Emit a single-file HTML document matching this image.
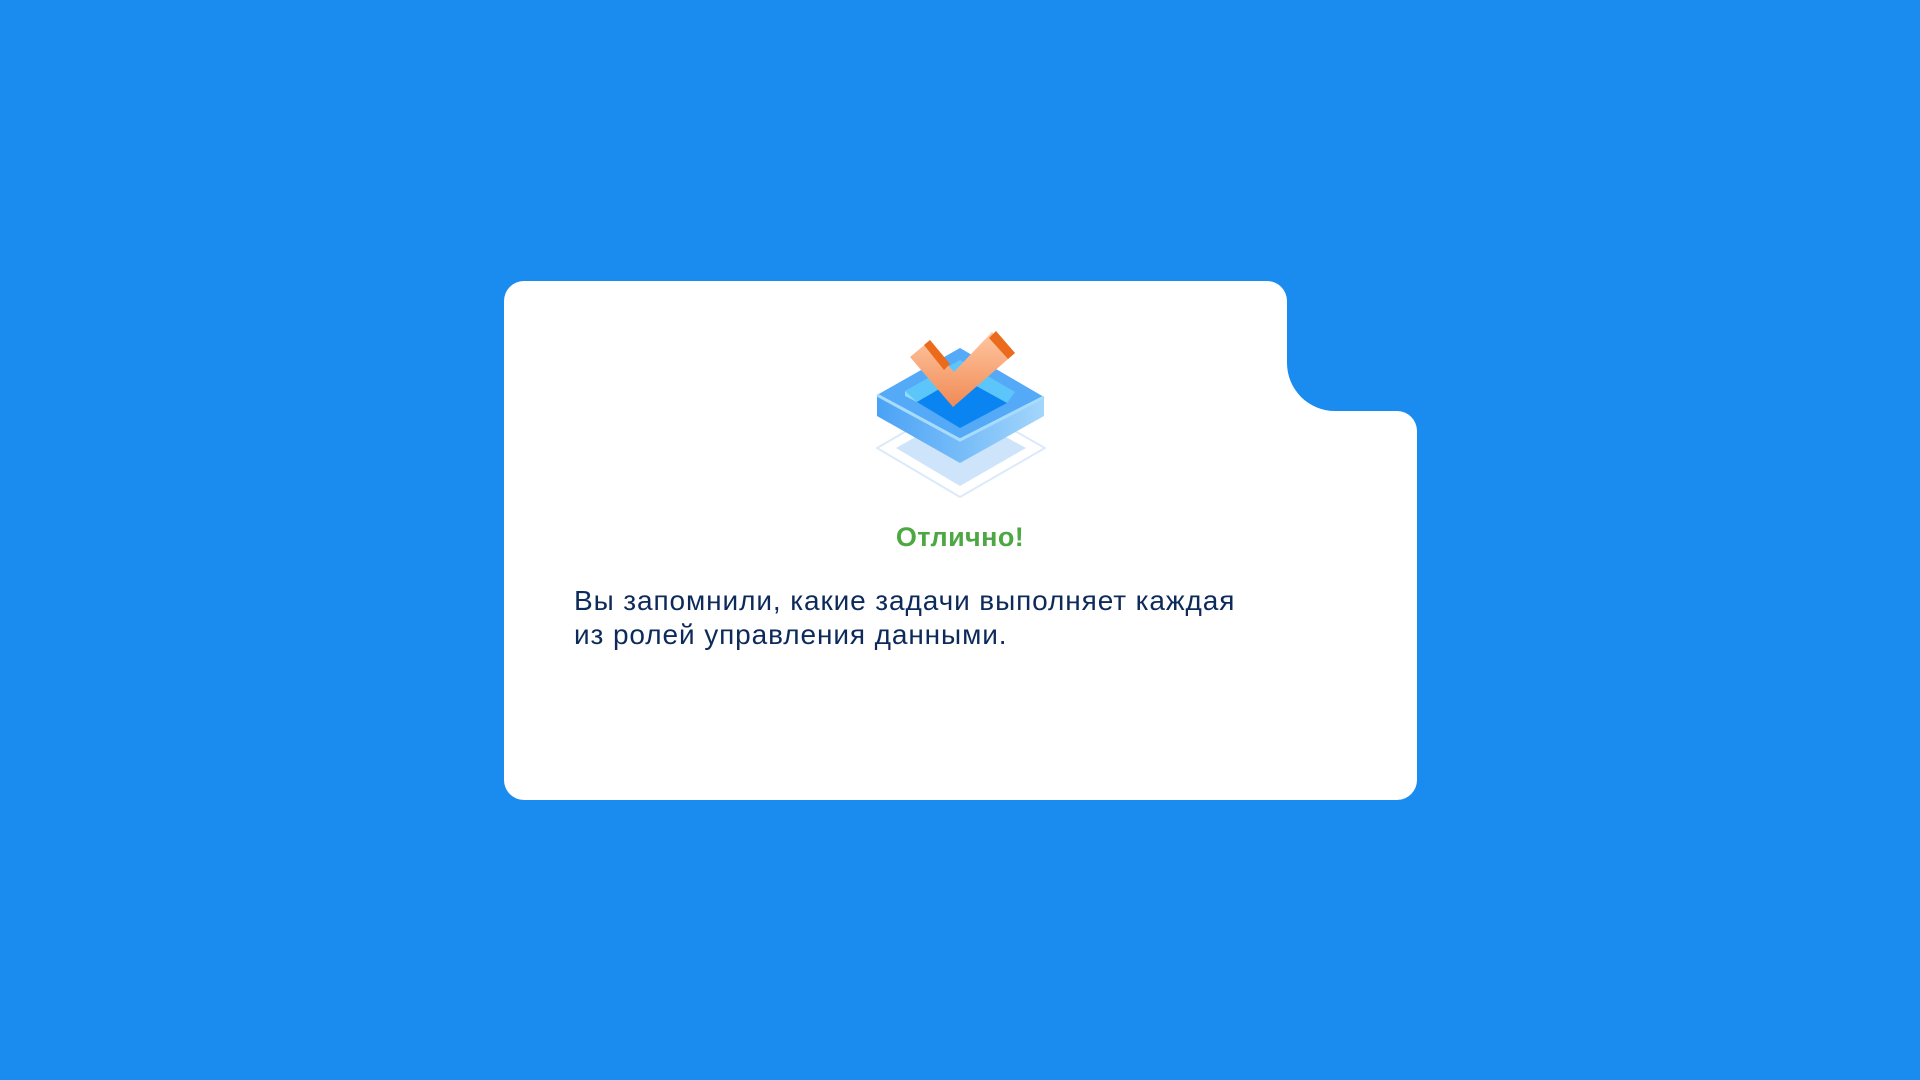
<!DOCTYPE html>
<html><head><meta charset="utf-8"><style>
html,body{margin:0;padding:0;width:1920px;height:1080px;overflow:hidden;background:#1a8cf0;}
svg{position:absolute;left:0;top:0;}
.t{position:absolute;font-family:"Liberation Sans",sans-serif;}
#title{left:0;width:1920px;text-align:center;top:520px;font-size:27px;font-weight:bold;color:#4da843;line-height:34px;letter-spacing:0.4px;}
#body{left:574px;top:584px;font-size:28px;line-height:34px;color:#0d2a5a;letter-spacing:0.9px;}
</style></head><body>
<svg width="1920" height="1080" viewBox="0 0 1920 1080">
<defs>
<linearGradient id="side" x1="0" x2="1" y1="0" y2="0"><stop offset="0" stop-color="#4aa2f5"/><stop offset="1" stop-color="#a3d6fb"/></linearGradient>
<linearGradient id="chk" x1="0" x2="0" y1="0" y2="1"><stop offset="0" stop-color="#ffc7a1"/><stop offset="1" stop-color="#f08a55"/></linearGradient>
</defs>
<path d="M524,281 H1267 A20,20 0 0 1 1287,301 V363 A48,48 0 0 0 1335,411 H1397 A20,20 0 0 1 1417,431 V780 A20,20 0 0 1 1397,800 H524 A20,20 0 0 1 504,780 V301 A20,20 0 0 1 524,281 Z" fill="#fff"/>
<path d="M877,448 L960,400 L1045,448 L960,497 Z" fill="none" stroke="#dbeafa" stroke-width="2" stroke-linejoin="round"/>
<path d="M896,448 L960,412 L1026,448 L960,486 Z" fill="#cde4fa"/>
<path d="M877,395 L877,416 L960,463 L1044,416 L1044,397 L960,440 Z" fill="url(#side)"/>
<path d="M877,395 L960,348 L1044,397 L960,440 Z" fill="#55aaf7"/>
<path d="M877,395 L960,440 L1044,397" fill="none" stroke="#a8dcfd" stroke-width="3" stroke-linejoin="round"/>
<path d="M905,391 L960,360 L1015,392 L1007,403 L960,377 L917,402 Z" fill="#5cc6fb"/>
<path d="M905,391 L917,402 L905,396 Z" fill="#8fdcfd"/>
<path d="M917,402 L960,377 L1007,403 L960,428 Z" fill="#0a84f0"/>
<path d="M910,357 L928,342 L954,372 L992,332 L1015,353 L953,407 Z" fill="url(#chk)"/>
<path d="M924,345 L930,340 L950,364 L944,370 Z" fill="#ec6a1c"/>
<path d="M989,338 L996,331 L1015,353 L1008,359 Z" fill="#ec6a1c"/>
</svg>
<div class="t" id="title">Отлично!</div>
<div class="t" id="body">Вы запомнили, какие задачи выполняет каждая<br>из ролей управления данными.</div>
</body></html>
